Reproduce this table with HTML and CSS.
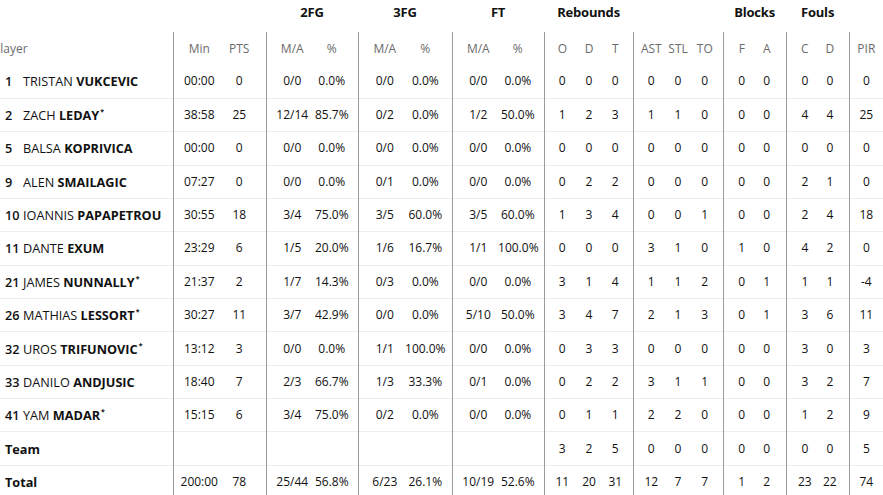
FILE: index.html
```html
<!DOCTYPE html>
<html lang="en">
<head>
<meta charset="utf-8">
<title>Box score</title>
<link rel="stylesheet" href="styles.css">
</head>
<body>
<table class="box">
  <colgroup>
    <col class="c-player">
    <col class="c-a"><col class="c-b">
    <col class="c-a"><col class="c-a">
    <col class="c-b"><col class="c-b">
    <col class="c-a"><col class="c-a">
    <col class="c-r"><col class="c-r"><col class="c-r3">
    <col class="c-s"><col class="c-s"><col class="c-s">
    <col class="c-k"><col class="c-k2">
    <col class="c-k"><col class="c-k2">
    <col class="c-pir">
  </colgroup>
  <thead>
    <tr class="groups">
      <th></th>
      <th colspan="2"></th>
      <th colspan="2">2FG</th>
      <th colspan="2">3FG</th>
      <th colspan="2">FT</th>
      <th colspan="3">Rebounds</th>
      <th colspan="3"></th>
      <th colspan="2">Blocks</th>
      <th colspan="2">Fouls</th>
      <th></th>
    </tr>
    <tr class="cols">
      <th class="player-h">Player</th>
      <th class="gs f">Min</th><th class="l">PTS</th>
      <th class="gs f">M/A</th><th class="l">%</th>
      <th class="gs f">M/A</th><th class="l">%</th>
      <th class="gs f">M/A</th><th class="l">%</th>
      <th class="gs f">O</th><th>D</th><th class="l">T</th>
      <th class="gs f">AST</th><th>STL</th><th class="l">TO</th>
      <th class="gs f">F</th><th class="l">A</th>
      <th class="gs f">C</th><th class="l">D</th>
      <th class="gs pir">PIR</th>
    </tr>
  </thead>
  <tbody id="rows"></tbody>
</table>
<script src="app.js"></script>
</body>
</html>
```

FILE: app.js
```js
var data = [
  ["1","TRISTAN","VUKCEVIC",false,"00:00","0","0/0","0.0%","0/0","0.0%","0/0","0.0%","0","0","0","0","0","0","0","0","0","0","0"],
  ["2","ZACH","LEDAY",true,"38:58","25","12/14","85.7%","0/2","0.0%","1/2","50.0%","1","2","3","1","1","0","0","0","4","4","25"],
  ["5","BALSA","KOPRIVICA",false,"00:00","0","0/0","0.0%","0/0","0.0%","0/0","0.0%","0","0","0","0","0","0","0","0","0","0","0"],
  ["9","ALEN","SMAILAGIC",false,"07:27","0","0/0","0.0%","0/1","0.0%","0/0","0.0%","0","2","2","0","0","0","0","0","2","1","0"],
  ["10","IOANNIS","PAPAPETROU",false,"30:55","18","3/4","75.0%","3/5","60.0%","3/5","60.0%","1","3","4","0","0","1","0","0","2","4","18"],
  ["11","DANTE","EXUM",false,"23:29","6","1/5","20.0%","1/6","16.7%","1/1","100.0%","0","0","0","3","1","0","1","0","4","2","0"],
  ["21","JAMES","NUNNALLY",true,"21:37","2","1/7","14.3%","0/3","0.0%","0/0","0.0%","3","1","4","1","1","2","0","1","1","1","-4"],
  ["26","MATHIAS","LESSORT",true,"30:27","11","3/7","42.9%","0/0","0.0%","5/10","50.0%","3","4","7","2","1","3","0","1","3","6","11"],
  ["32","UROS","TRIFUNOVIC",true,"13:12","3","0/0","0.0%","1/1","100.0%","0/0","0.0%","0","3","3","0","0","0","0","0","3","0","3"],
  ["33","DANILO","ANDJUSIC",false,"18:40","7","2/3","66.7%","1/3","33.3%","0/1","0.0%","0","2","2","3","1","1","0","0","3","2","7"],
  ["41","YAM","MADAR",true,"15:15","6","3/4","75.0%","0/2","0.0%","0/0","0.0%","0","1","1","2","2","0","0","0","1","2","9"],
  ["","Team","",false,"","","","","","","","","3","2","5","0","0","0","0","0","0","0","5"],
  ["","Total","",false,"200:00","78","25/44","56.8%","6/23","26.1%","10/19","52.6%","11","20","31","12","7","7","1","2","23","22","74"]
];
// class per stat column (index from 4)
var cls = ["gs f","l","gs f","l","gs f","l","gs f","l","gs f","","l","gs f","","l","gs f","l","gs f","l","gs pir"];
var tb = document.getElementById("rows");
data.forEach(function (r) {
  var tr = document.createElement("tr");
  var td = document.createElement("td");
  td.className = "player";
  if (r[0] === "") {
    td.innerHTML = '<span class="sum">' + r[1] + '</span>';
  } else {
    td.innerHTML = '<span class="num">' + r[0] + '</span>' + r[1] + ' <b>' + r[2] + '</b>' + (r[3] ? '<sup class="st">*</sup>' : '');
  }
  tr.appendChild(td);
  for (var i = 4; i < r.length; i++) {
    var c = document.createElement("td");
    c.className = cls[i - 4];
    c.textContent = r[i];
    tr.appendChild(c);
  }
  tb.appendChild(tr);
});
```

FILE: styles.css
```css
html, body {
  margin: 0;
  padding: 0;
  background: #ffffff;
}
body {
  font-family: "Open Sans", "Noto Sans", sans-serif;
  color: #111111;
  overflow: hidden;
}
.box {
  border-collapse: collapse;
  table-layout: fixed;
  width: 883px;
  font-size: 12px;
  line-height: 16px;
}
.c-player { width: 173px; }
.c-a { width: 46px; }
.c-b { width: 47px; }
.c-r { width: 30px; }
.c-r3 { width: 29px; }
.c-s { width: 30px; }
.c-k { width: 31px; }
.c-k2 { width: 32px; }
.c-pir { width: 34px; }

.box th, .box td {
  padding: 0;
  text-align: center;
  vertical-align: middle;
  white-space: nowrap;
}
.groups { height: 32px; }
.groups th {
  vertical-align: top;
  padding-top: 3px;
  font-size: 13px;
  font-weight: 700;
  letter-spacing: -0.2px;
  line-height: 18px;
  color: #111;
}
.cols { height: 33px; }
.cols th {
  font-weight: 400;
  color: #6b6b6b;
}
.cols th.player-h {
  text-align: left;
  text-indent: -7px;
}
.box .gs { border-left: 1px solid #9b9b9b; }
.box .f { padding-left: 6px; }
.box .l { padding-right: 6px; }
.box .pir { padding-right: 0; }

.box tbody tr { height: 33.36px; }
.box tbody td { border-top: 1px solid #ececec; }
.box tbody tr:first-child td { border-top: none; }

.player {
  text-align: left !important;
  padding-left: 5px !important;
  font-size: 12.7px;
}
.num {
  display: inline-block;
  width: 18px;
  font-weight: 600;
}
.player b { font-weight: 700; }
.sum { font-weight: 700; }
.st {
  font-size: 7px;
  font-weight: 700;
  vertical-align: top;
  line-height: 1;
  margin-left: 1px;
  position: relative;
  top: 1px;
}
```
